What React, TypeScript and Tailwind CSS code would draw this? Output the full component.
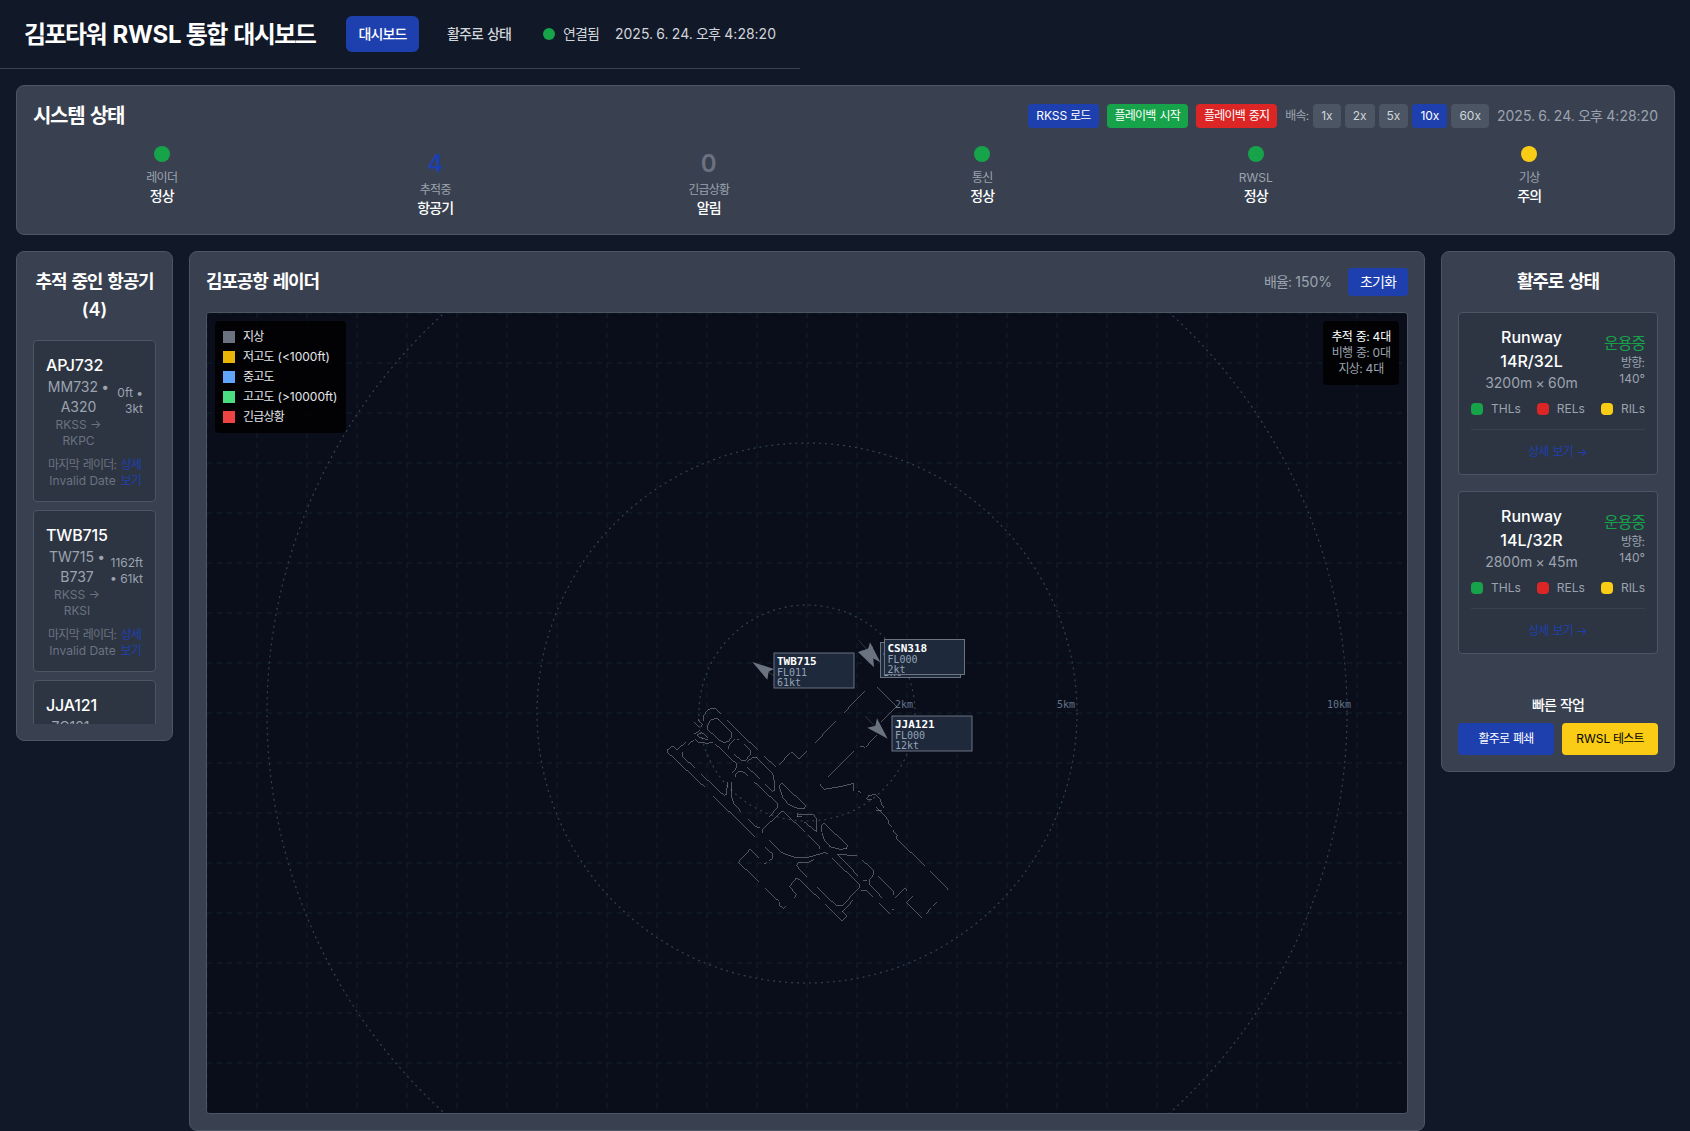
import React from 'react';

const MAP_LINES = [
  '190,362 192,345 205,328 222,324 232,330 245,343',
  '262,361 355,452',
  '202,378 210,362 226,355 236,358 274,398 275,410 266,424 252,427 243,424 204,390 202,378',
  '173,357 188,374 183,380',
  '163,368 178,382',
  '180,392 163,402',
  '145,435 163,418',
  '137,426 112,450 97,438 82,450 84,458 195,562',
  '127,455 127,468 166,506',
  '184,523 252,586 260,582 262,545',
  '166,418 175,426 200,430 220,427',
  '187,397 172,404 178,412 205,420',
  '186,398 205,414',
  '226,432 288,490 290,502 278,518',
  '266,448 265,440 272,428 286,418',
  '290,418 298,418',
  '313,434 330,450 331,463 318,480 305,482 282,462',
  '286,530 286,525 295,515 307,513 323,527',
  '320,500 360,536',
  '320,488 335,474 350,472 398,520 404,550 404,570 398,575 375,552',
  '343,546 412,610 412,622 388,652',
  '373,469 407,500',
  '415,496 452,458 458,459 478,477 500,454',
  '275,545 275,590 282,612 305,637',
  '220,589 345,710',
  '324,657 348,680 360,683',
  '368,700 367,690 410,648 425,634 436,638',
  '419,565 418,556 425,549 434,557 497,617 493,626 470,624 445,613 428,592 419,565',
  '436,640 494,695',
  '505,706 538,738 538,748',
  '485,651 472,650 472,642 520,643 529,655 529,695 493,666',
  '545,695 545,675 553,670 622,736 620,746 600,748 570,740 553,720 546,700',
  '388,720 425,758 460,771 505,772 540,762 555,757 563,762',
  '376,742 398,762 396,778 386,782',
  '373,791 380,788',
  '358,775 330,748 295,787 358,846',
  '376,866 418,905 418,915 430,926 437,918',
  '500,830 469,797 475,788 505,787 522,778',
  '463,893 470,883 448,860 468,835 480,840 540,898',
  '532,862 590,918 605,918 657,865 659,855 575,772',
  '555,913 607,963 622,948 607,935 640,900',
  '594,765 655,828',
  '592,763 650,767',
  '667,781 700,810 700,825 690,838 690,855 728,895',
  '715,828 760,873 762,885',
  '670,842 680,841',
  '664,873 680,872 698,891',
  '715,908 748,941',
  '755,925 761,930',
  '766,892 795,864 803,874',
  '818,890 800,907 846,954',
  '858,941 873,925',
  '879,918 890,907',
  '925,870 915,857 870,813',
  '856,799 769,715 772,706 758,690',
  '708,620 745,660 746,670 755,682',
  '695,598 680,597 685,588 705,583 722,600 724,612 733,625',
  '709,630 725,632',
  '540,553 552,568 600,560 640,550 641,572',
  '655,575 662,577',
  '565,530 641,454',
  '660,438 676,442 712,404',
  '725,365 770,320 712,262',
  '526,428 587,363',
  '612,338 675,273',
];

const RINGS = [
  { r: 108, label: '2km' },
  { r: 270, label: '5km' },
  { r: 540, label: '10km' },
];

// Tightens Hangul runs while keeping word gaps open; Latin letters and digits stay at natural width.
function K({ t }: { t: string }) {
  const parts = t.split(/([\uac00-\ud7a3]+ ?| +)/);
  return (
    <>
      {parts.map((part, i) => {
        if (i % 2 === 0) return part;
        if (part.trim() === '') return <span key={i} className="tracking-[-0.05em]">{part}</span>;
        const word = part.trimEnd();
        return (
          <React.Fragment key={i}>
            <span className="tracking-[-0.065em]">{word}</span>
            {word !== part && <span className="tracking-[0.03em]"> </span>}
          </React.Fragment>
        );
      })}
    </>
  );
}

function DataBlock({ x, y, lines }: { x: number; y: number; lines: string[] }) {
  return (
    <g>
      <rect x={x} y={y} width="80" height="35" fill="#1e293b" stroke="#6b7280" strokeWidth="1" />
      <text x={x + 3} y={y + 12} fontSize="11" fontWeight="700" fill="#ffffff">{lines[0]}</text>
      <text x={x + 3} y={y + 23} fontSize="10" fill="#94a3b8">{lines[1]}</text>
      <text x={x + 3} y={y + 33} fontSize="10" fill="#94a3b8">{lines[2]}</text>
    </g>
  );
}

function RadarCanvas() {
  return (
    <svg width="1200" height="800" viewBox="0 0 1200 800" className="block bg-[#0a0e1a] font-['DejaVu_Sans_Mono',monospace]">
      <g stroke="#0e1825" strokeWidth="2" strokeDasharray="5 5">
        {Array.from({ length: 24 }, (_, i) => (
          <line key={i} x1={i * 50} x2={i * 50} y1="0" y2="800" />
        ))}
        {Array.from({ length: 16 }, (_, i) => (
          <line key={i} y1={i * 50} y2={i * 50} x1="0" x2="1200" />
        ))}
      </g>
      {RINGS.map((ring) => (
        <g key={ring.r}>
          <circle cx="600" cy="400" r={ring.r} fill="none" stroke="#334155" strokeWidth="1.2" strokeDasharray="2 4" />
          <text x={580 + ring.r} y="395" fontSize="10" fill="#64748b">{ring.label}</text>
        </g>
      ))}
      <g
        transform="translate(433 287) scale(0.33333)"
        fill="none"
        stroke="#9ca3af"
        strokeOpacity="0.6"
        strokeWidth="2.4"
        shapeRendering="crispEdges"
      >
        {MAP_LINES.map((points) => (
          <polyline key={points} points={points} />
        ))}
      </g>
      <g transform="translate(433 287) scale(0.33333)" fill="#6b7280">
        <g stroke="#6b7280" strokeOpacity="0.4" strokeWidth="3">
          <line x1="656" y1="121" x2="680" y2="148" />
          <line x1="676" y1="349" x2="702" y2="376" />
          <line x1="380" y1="212" x2="402" y2="228" />
        </g>
        <polygon points="743,416 711,355 706,377 682,383" />
        <polygon points="337,186 402,207 386,215 382,239" />
        <polygon points="721,187 690,127 684,148 660,154" />
        <polygon points="702,202 697,138 680,148 654,156" />
      </g>
      <DataBlock x={673.5} y={329.5} lines={['APJ732', 'FL000', '3kt']} />
      <DataBlock x={677.5} y={326.5} lines={['CSN318', 'FL000', '2kt']} />
      <DataBlock x={567} y={340} lines={['TWB715', 'FL011', '61kt']} />
      <DataBlock x={685} y={403} lines={['JJA121', 'FL000', '12kt']} />
    </svg>
  );
}

function StatusItem({ dot, value, valueClass, label, text }: { dot?: string; value?: string; valueClass?: string; label: string; text: string }) {
  return (
    <div className="text-center">
      {dot && <div className={`mx-auto mb-2 h-4 w-4 rounded-full ${dot}`} />}
      {value && <div className={`text-2xl leading-9 font-semibold ${valueClass}`}>{value}</div>}
      <div className="text-xs text-[#9ca3af]"><K t={label} /></div>
      <div className="text-sm font-medium"><K t={text} /></div>
    </div>
  );
}

function FlightCard({ name, flight, type, from, to, alt, speed, leftWidth }: { name: string; flight: string; type: string; from: string; to: string; alt: string; speed: string; leftWidth: string }) {
  return (
    <div className="h-[162px] shrink-0 rounded border border-[#4b5563] bg-[#2d3543] p-3">
      <div className="flex items-center justify-between">
        <div className={`shrink-0 ${leftWidth}`}>
          <div className="text-left font-medium tracking-[-0.01em] whitespace-nowrap">{name}</div>
          <div className="text-sm text-[#9ca3af]"><K t={`${flight} •`} /><br />{type}</div>
          <div className="text-xs text-[#6b7280]">{from} →<br />{to}</div>
        </div>
        <div className="text-right text-xs whitespace-nowrap text-[#9ca3af]">{alt}<br />{speed}</div>
      </div>
      <div className="mt-2 flex text-xs whitespace-nowrap text-[#6b7280]">
        <div className="w-[73px] shrink-0"><K t="마지막 레이더:" /><br />Invalid Date</div>
        <div className="flex-1 text-[#1e40af]"><K t="상세" /><br /><K t="보기" /></div>
      </div>
    </div>
  );
}

function Lamp({ color, label }: { color: string; label: string }) {
  return (
    <div className="flex items-center gap-2">
      <div className={`h-3 w-3 rounded ${color}`} />
      <span>{label}</span>
    </div>
  );
}

function RunwayCard({ name, size }: { name: string; size: string }) {
  return (
    <div className="h-[163px] rounded border border-[#4b5563] bg-[#2d3543] p-3">
      <div className="flex items-center justify-between">
        <div className="w-[121px]">
          <div className="font-medium">Runway<br />{name}</div>
          <div className="text-sm text-[#9ca3af]"><K t={size} /></div>
        </div>
        <div className="text-right">
          <div className="whitespace-nowrap text-[#16a34a]"><K t="운용중" /></div>
          <div className="text-xs text-[#9ca3af]"><K t="방향:" /><br />140°</div>
        </div>
      </div>
      <div className="mt-2 flex justify-between text-xs text-[#9ca3af]">
        <Lamp color="bg-[#16a34a]" label="THLs" />
        <Lamp color="bg-[#dc2626]" label="RELs" />
        <Lamp color="bg-[#facc15]" label="RILs" />
      </div>
      <div className="mt-3 border-t border-[#374151] pt-2">
        <span className="text-xs text-[#1e40af]"><K t="상세 보기" />{' →'}</span>
      </div>
    </div>
  );
}

const LEGEND = [
  { color: 'bg-[#6b7280]', label: '지상' },
  { color: 'bg-[#eab308]', label: '저고도 (<1000ft)' },
  { color: 'bg-[#60a5fa]', label: '중고도' },
  { color: 'bg-[#4ade80]', label: '고고도 (>10000ft)' },
  { color: 'bg-[#ef4444]', label: '긴급상황' },
];

const SPEEDS = ['1x', '2x', '5x', '10x', '60x'];

export default function App() {
  return (
    <div className="min-h-[1131px] bg-[#111827] text-center font-['Inter','Noto_Sans_CJK_KR',sans-serif] text-base text-white">
      <header className="flex h-[69px] w-[800px] items-center justify-between border-b border-[#374151] px-6 whitespace-nowrap">
        <div className="flex items-center gap-8">
          <h1 className="w-[290px] pt-0.5 text-left text-2xl font-bold tracking-[-0.01em]"><K t="김포타워 RWSL 통합 대시보드" /></h1>
          <nav className="flex gap-4 text-sm font-medium">
            <button className="w-[73px] rounded-md bg-[#1e40af] py-2"><K t="대시보드" /></button>
            <button className="px-3 py-2 text-[#d1d5db]"><K t="활주로 상태" /></button>
          </nav>
        </div>
        <div className="flex items-center gap-4 text-sm text-[#d1d5db]">
          <div className="flex items-center gap-2">
            <div className="h-3 w-3 rounded-full bg-[#16a34a]" />
            <span><K t="연결됨" /></span>
          </div>
          <span><K t="2025. 6. 24. 오후 4:28:20" /></span>
        </div>
      </header>

      <main className="flex flex-col gap-4 pt-4 pr-[15px] pl-4">
        <section className="h-[150px] rounded-lg border border-[#4b5563] bg-[#394150] p-4">
          <div className="mb-4 flex items-center justify-between">
            <h2 className="text-xl font-semibold"><K t="시스템 상태" /></h2>
            <div className="flex items-center gap-2 text-xs">
              <button className="rounded bg-[#1e40af] px-2 py-1"><K t="RKSS 로드" /></button>
              <button className="rounded bg-[#16a34a] px-2 py-1"><K t="플레이백 시작" /></button>
              <button className="rounded bg-[#dc2626] px-2 py-1"><K t="플레이백 중지" /></button>
              <div className="flex items-center gap-1">
                <span className="text-[#9ca3af]"><K t="배속:" /></span>
                {SPEEDS.map((s) => (
                  <button key={s} className={s === '10x' ? 'rounded bg-[#1e40af] px-2 py-1' : 'rounded bg-[#4b5563] px-2 py-1 text-[#d1d5db]'}>
                    {s}
                  </button>
                ))}
              </div>
              <span className="text-sm text-[#9ca3af]"><K t="2025. 6. 24. 오후 4:28:20" /></span>
            </div>
          </div>
          <div className="grid grid-cols-6 gap-4">
            <StatusItem dot="bg-[#16a34a]" label="레이더" text="정상" />
            <StatusItem value="4" valueClass="text-[#1e40af]" label="추적중" text="항공기" />
            <StatusItem value="0" valueClass="text-[#6b7280]" label="긴급상황" text="알림" />
            <StatusItem dot="bg-[#16a34a]" label="통신" text="정상" />
            <StatusItem dot="bg-[#16a34a]" label="RWSL" text="정상" />
            <StatusItem dot="bg-[#facc15]" label="기상" text="주의" />
          </div>
        </section>

        <div className="flex items-start gap-4">
          <aside className="w-[157px] shrink-0 rounded-lg border border-[#4b5563] bg-[#394150] p-4">
            <h3 className="mb-4 text-lg font-semibold whitespace-nowrap"><K t="추적 중인 항공기" /><br />(4)</h3>
            <div className="flex h-96 flex-col gap-2 overflow-hidden">
              <FlightCard name="APJ732" flight="MM732" type="A320" from="RKSS" to="RKPC" alt="0ft •" speed="3kt" leftWidth="w-[65px]" />
              <FlightCard name="TWB715" flight="TW715" type="B737" from="RKSS" to="RKSI" alt="1162ft" speed="• 61kt" leftWidth="w-[62px]" />
              <FlightCard name="JJA121" flight="7C121" type="B738" from="RKSS" to="RKPC" alt="0ft •" speed="12kt" leftWidth="w-[60px]" />
            </div>
          </aside>

          <section className="w-[1236px] shrink-0 rounded-lg border border-[#4b5563] bg-[#394150] p-4">
            <div className="mb-4 flex items-center justify-between">
              <h3 className="text-lg font-semibold"><K t="김포공항 레이더" /></h3>
              <div className="flex items-center gap-4 text-sm">
                <span className="text-[#9ca3af]"><K t="배율: 150%" /></span>
                <button className="rounded bg-[#1e40af] px-3 py-1"><K t="초기화" /></button>
              </div>
            </div>
            <div className="relative overflow-hidden rounded border border-[#4b5563]">
              <RadarCanvas />
              <div className="absolute top-2 left-2 flex w-[131px] flex-col gap-1 rounded bg-black/80 p-2 text-xs whitespace-nowrap text-[#e5e7eb]">
                {LEGEND.map((item) => (
                  <div key={item.label} className="flex items-center gap-2">
                    <div className={`h-3 w-3 ${item.color}`} />
                    <span><K t={item.label} /></span>
                  </div>
                ))}
              </div>
              <div className="absolute top-2 right-2 w-[76px] rounded bg-black/80 p-2 text-xs whitespace-nowrap text-[#9ca3af]">
                <div className="text-white"><K t="추적 중: 4대" /></div>
                <div><K t="비행 중: 0대" /></div>
                <div><K t="지상: 4대" /></div>
              </div>
            </div>
          </section>

          <aside className="h-[521px] flex-1 rounded-lg border border-[#4b5563] bg-[#394150] p-4">
            <h3 className="mb-4 text-lg font-semibold"><K t="활주로 상태" /></h3>
            <div className="flex flex-col gap-4">
              <RunwayCard name="14R/32L" size="3200m × 60m" />
              <RunwayCard name="14L/32R" size="2800m × 45m" />
            </div>
            <div className="mt-[41px]">
              <h4 className="mb-2 text-sm font-medium"><K t="빠른 작업" /></h4>
              <div className="grid grid-cols-2 gap-2 text-xs">
                <button className="rounded bg-[#1e40af] py-2"><K t="활주로 폐쇄" /></button>
                <button className="rounded bg-[#facc15] py-2 text-black"><K t="RWSL 테스트" /></button>
              </div>
            </div>
          </aside>
        </div>
      </main>
    </div>
  );
}
